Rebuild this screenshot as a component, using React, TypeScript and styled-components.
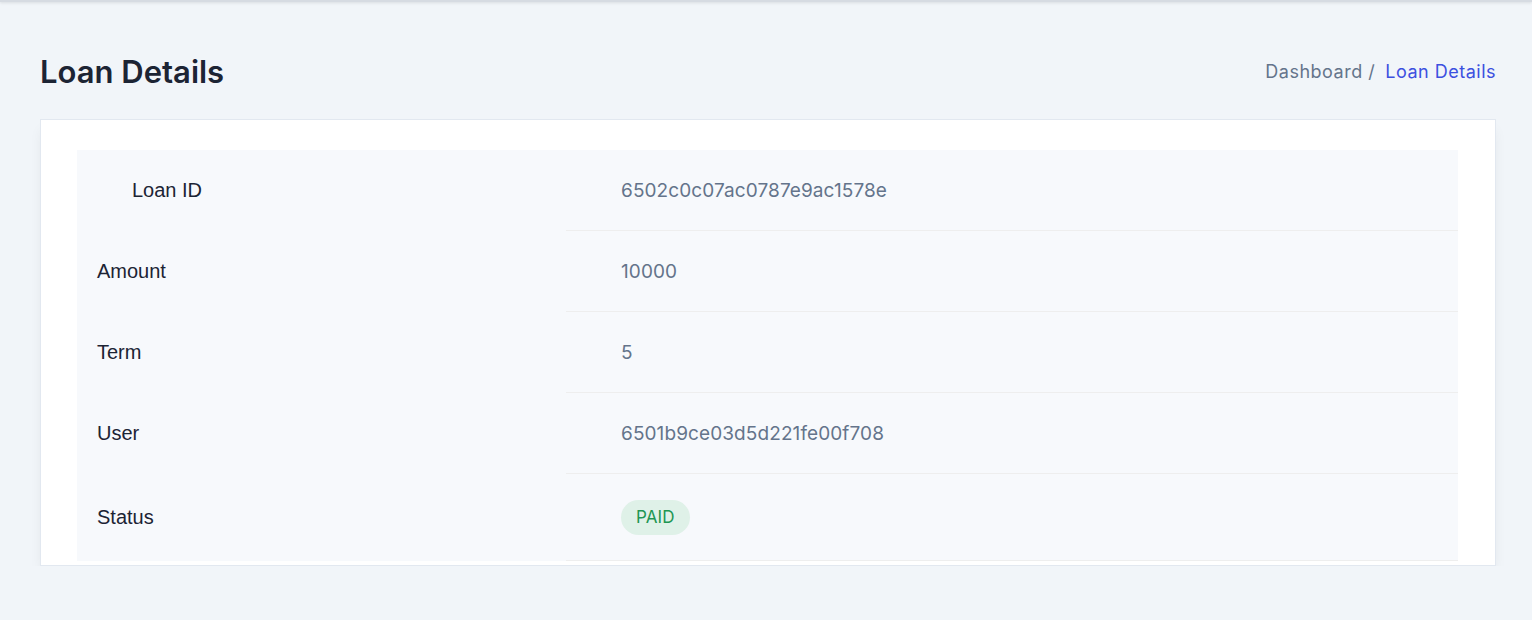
import React from "react";
import styled, { createGlobalStyle } from "styled-components";

const Global = createGlobalStyle`
  html, body { margin: 0; padding: 0; }
  body { background: #f1f5f9; font-family: Inter, "Noto Sans", sans-serif; }
`;

const TopBar = styled.div`
  height: 2px;
  background: #d6dbe2;
  box-shadow: 0 1px 3px rgba(0,0,0,0.12);
`;

const Main = styled.main`
  padding: 41px 36px 0 40px;
`;

const Header = styled.div`
  display: flex;
  justify-content: space-between;
  align-items: center;
  margin-bottom: 20px;
  height: 56px;
`;

const Title = styled.h2`
  margin: 0;
  font-size: 31px;
  font-weight: 600;
  color: #1c2434;
`;

const Crumbs = styled.nav`
  font-size: 18px;
  letter-spacing: 0.5px;
  color: #64748b;
  display: flex;
  gap: 10px;
`;

const Current = styled.span`
  color: #3c50e0;
`;

const Card = styled.div`
  background: #fff;
  border: 1px solid #e2e8f0;
  box-shadow: 0 8px 13px -3px rgba(0,0,0,0.08);
  padding: 30px 37px 4px 36px;
`;

const Table = styled.div`
  display: grid;
  grid-template-columns: 489px 1fr;
  background: #f7f9fc;
`;

const Label = styled.div<{ $indent?: boolean }>`
  display: flex;
  align-items: center;
  font-size: 20px;
  color: #1c2434;
  padding-left: ${(p) => (p.$indent ? 55 : 20)}px;
  font-family: "Liberation Sans", Arial, sans-serif;
`;

const Value = styled.div<{ $h: number }>`
  display: flex;
  align-items: center;
  height: ${(p) => p.$h}px;
  padding-left: 55px;
  font-size: 19px;
  letter-spacing: 0.1px;
  color: #64748b;
  border-bottom: 1px solid #eeeeee;
`;

const Badge = styled.span`
  display: inline-block;
  padding: 7px 15px;
  border-radius: 999px;
  background: #dff1e8;
  color: #219653;
  font-size: 17px;
  line-height: 21px;
`;

const rows: { label: string; value: React.ReactNode; h: number; indent?: boolean }[] = [
  { label: "Loan ID", value: "6502c0c07ac0787e9ac1578e", h: 80, indent: true },
  { label: "Amount", value: "10000", h: 80 },
  { label: "Term", value: "5", h: 80 },
  { label: "User", value: "6501b9ce03d5d221fe00f708", h: 80 },
  { label: "Status", value: <Badge>PAID</Badge>, h: 86 },
];

export default function App() {
  return (
    <>
      <Global />
      <TopBar />
      <Main>
        <Header>
          <Title>Loan Details</Title>
          <Crumbs>
            <span>Dashboard /</span>
            <Current>Loan Details</Current>
          </Crumbs>
        </Header>
        <Card>
          <Table>
            {rows.map((r) => (
              <React.Fragment key={r.label}>
                <Label $indent={r.indent}>{r.label}</Label>
                <Value $h={r.h}>{r.value}</Value>
              </React.Fragment>
            ))}
          </Table>
        </Card>
      </Main>
    </>
  );
}
